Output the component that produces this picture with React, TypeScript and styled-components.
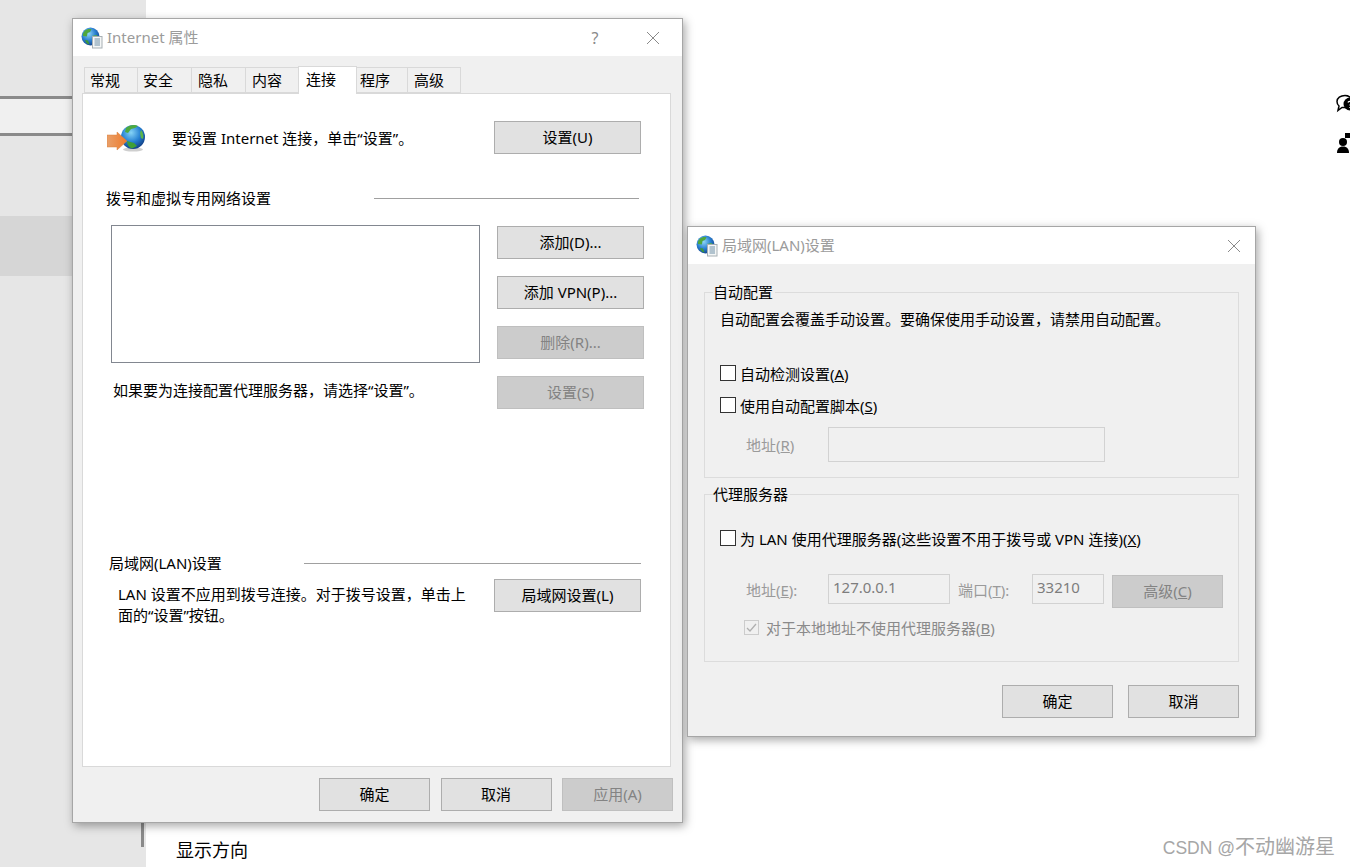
import React from "react";
import styled, { createGlobalStyle } from "styled-components";

const GlobalStyle = createGlobalStyle`
  html, body {
    margin: 0;
    padding: 0;
    background: #fff;
  }
  * {
    box-sizing: border-box;
  }
  body {
    font-family: "Noto Sans", "Noto Sans CJK SC", sans-serif;
    font-size: 15px;
    color: #000;
  }
`;

const Page = styled.div`
  position: relative;
  display: flex;
  width: 1350px;
  height: 867px;
  overflow: hidden;
  background: #fff;
`;

const Sidebar = styled.aside`
  width: 146px;
  height: 100%;
  background: #e6e6e6;
  display: flex;
  flex-direction: column;
  padding-top: 96px;
`;

const SideItem = styled.div`
  height: 40px;
  background: #f0f0f0;
  border-top: 3px solid #8a8a8a;
  border-bottom: 3px solid #8a8a8a;
`;

const SideActive = styled.div`
  height: 60px;
  margin-top: 80px;
  background: #d6d6d6;
`;

const SideThumb = styled.div`
  width: 3px;
  height: 60px;
  margin-top: auto;
  margin-bottom: 20px;
  margin-left: 141px;
  background: #8a8a8a;
`;

const Main = styled.main`
  flex: 1;
  display: flex;
  flex-direction: column;
  padding-top: 94px;
`;

const Rail = styled.div`
  align-self: flex-end;
  width: 14px;
  display: flex;
  flex-direction: column;
  gap: 19px;
  overflow: hidden;
`;

const Caption = styled.div`
  margin-top: auto;
  margin-bottom: 4px;
  margin-left: 30px;
  font-size: 18px;
  line-height: 26px;
`;

const Watermark = styled.div`
  position: absolute;
  right: 15px;
  bottom: 6px;
  font-family: "Liberation Sans", "Noto Sans CJK SC", sans-serif;
  font-size: 20px;
  line-height: 26px;
  color: #a6a6a6;
`;

const WatermarkLatin = styled.span`
  font-size: 17.5px;
`;

const Win = styled.section<{ $x: number; $y: number; $w: number; $h: number }>`
  position: absolute;
  left: ${(p) => p.$x}px;
  top: ${(p) => p.$y}px;
  width: ${(p) => p.$w}px;
  height: ${(p) => p.$h}px;
  display: flex;
  flex-direction: column;
  background: #f0f0f0;
  border: 1px solid #a6a6a6;
  box-shadow: 2px 3px 9px rgba(0, 0, 0, 0.35);
`;

const TitleBar = styled.header`
  height: 37px;
  flex: none;
  background: #fff;
  display: flex;
  align-items: center;
  padding-left: 8px;
`;

const TitleText = styled.span`
  margin-left: 4px;
  margin-bottom: 2px;
  color: #9b9b9b;
  font-size: 15px;
  flex: 1;
`;

const TitleBtn = styled.button<{ $w: number }>`
  width: ${(p) => p.$w}px;
  height: 37px;
  padding: 0;
  border: 0;
  background: none;
  color: #8a8a8a;
  font: inherit;
  font-size: 16px;
  display: flex;
  align-items: center;
  justify-content: center;
`;

const TabRow = styled.div`
  display: flex;
  align-items: flex-end;
  height: 37px;
  flex: none;
  padding-left: 11px;
`;

const Tab = styled.div<{ $active?: boolean; $w: number; $pad: number }>`
  width: ${(p) => p.$w}px;
  height: ${(p) => (p.$active ? 28 : 26)}px;
  margin-bottom: ${(p) => (p.$active ? -1 : 0)}px;
  padding-top: 1px;
  padding-left: ${(p) => p.$pad}px;
  position: relative;
  z-index: ${(p) => (p.$active ? 1 : 0)};
  background: ${(p) => (p.$active ? "#fff" : "#f0f0f0")};
  border: 1px solid #d9d9d9;
  border-bottom: ${(p) => (p.$active ? "0" : "1px solid #d9d9d9")};
  margin-right: -1px;
  font-size: 15px;
  line-height: 22px;
`;

const TabPanel = styled.div`
  width: 589px;
  height: 674px;
  margin-left: 9px;
  background: #fff;
  border: 1px solid #d9d9d9;
  display: flex;
  flex-direction: column;
  padding-top: 27px;
`;

const SetupRow = styled.div`
  display: flex;
  align-items: center;
  height: 33px;
  padding-left: 24px;
`;

const SetupText = styled.span`
  margin-left: 27px;
  width: 322px;
  line-height: 20px;
`;

const SectionHead = styled.div<{ $left: number; $gap: number; $top: number; $w: number }>`
  display: flex;
  align-items: center;
  width: ${(p) => p.$w}px;
  margin-left: ${(p) => p.$left}px;
  margin-top: ${(p) => p.$top}px;
  height: 22px;
  gap: ${(p) => p.$gap}px;
  &::after {
    content: "";
    flex: 1;
    height: 1px;
    background: #a0a0a0;
  }
`;

const HeadText = styled.span`
  margin-bottom: 2px;
`;

const DialGrid = styled.div`
  display: grid;
  grid-template-columns: 369px 147px;
  column-gap: 17px;
  margin-left: 28px;
  margin-top: 16px;
`;

const ListBox = styled.div`
  height: 138px;
  background: #fff;
  border: 1px solid #828790;
`;

const DialLeft = styled.div`
  display: flex;
  flex-direction: column;
`;

const Hint = styled.div`
  margin-top: 16px;
  margin-left: 2px;
  line-height: 22px;
`;

const DialButtons = styled.div`
  display: flex;
  flex-direction: column;
  gap: 17px;
  padding-top: 1px;
`;

const Btn = styled.button<{ $disabled?: boolean; $w?: number }>`
  width: ${(p) => (p.$w ? `${p.$w}px` : "100%")};
  height: 33px;
  flex: none;
  padding: 0 0 2px;
  background: ${(p) => (p.$disabled ? "#cccccc" : "#e1e1e1")};
  border: 1px solid ${(p) => (p.$disabled ? "#bfbfbf" : "#adadad")};
  color: ${(p) => (p.$disabled ? "#838383" : "#000")};
  font: inherit;
  font-size: 15px;
  line-height: 20px;
`;

const AdvancedBtn = styled(Btn)`
  margin: 2px 0 -2px 8px;
`;

const LanRow = styled.div`
  display: flex;
  align-items: flex-start;
  margin-top: 5px;
  margin-left: 35px;
`;

const LanText = styled.p`
  width: 376px;
  margin: 0;
  padding-top: 5px;
  font-size: 15px;
  line-height: 21px;
`;

const Footer = styled.footer<{ $pad: number; $top: number; $gap: number }>`
  display: flex;
  justify-content: flex-end;
  gap: ${(p) => p.$gap}px;
  padding-right: ${(p) => p.$pad}px;
  margin-top: ${(p) => p.$top}px;
`;

const LanBody = styled.div`
  flex: 1;
  padding: 27px 16px 0;
  display: flex;
  flex-direction: column;
`;

const Group = styled.fieldset<{ $h: number; $top?: number }>`
  height: ${(p) => p.$h}px;
  margin: ${(p) => p.$top ?? 0}px 0 0;
  padding: 0 15px;
  min-width: 0;
  border: 1px solid #dcdcdc;
  display: block;
`;

const GroupLabel = styled.legend`
  position: relative;
  top: 1px;
  padding: 0 2px 0 0;
  margin-left: -7px;
  font-size: 15px;
  line-height: 0;
  height: 2px;
`;

const Notice = styled.p`
  margin: 15px 0 0;
  line-height: 22px;
  font-size: 15px;
`;

const CheckRow = styled.label<{ $top: number; $left?: number; $off?: boolean }>`
  display: flex;
  align-items: center;
  gap: ${(p) => (p.$off ? 7 : 4)}px;
  height: 22px;
  margin-top: ${(p) => p.$top}px;
  margin-left: ${(p) => p.$left ?? 0}px;
  color: ${(p) => (p.$off ? "#8a8a8a" : "#000")};
`;

const Box = styled.span<{ $off?: boolean }>`
  width: ${(p) => (p.$off ? 15 : 16)}px;
  height: ${(p) => (p.$off ? 15 : 16)}px;
  flex: none;
  background: ${(p) => (p.$off ? "#f0f0f0" : "#fff")};
  border: 1px solid ${(p) => (p.$off ? "#cccccc" : "#333")};
  display: flex;
  align-items: center;
  justify-content: center;
`;

const FieldRow = styled.div<{ $top: number }>`
  display: flex;
  align-items: center;
  margin-top: ${(p) => p.$top}px;
  margin-left: 26px;
`;

const FieldLabel = styled.span<{ $w: number; $pad?: number }>`
  width: ${(p) => p.$w}px;
  padding-left: ${(p) => p.$pad ?? 0}px;
  flex: none;
  color: #9a9a9a;
`;

const Field = styled.div<{ $w: number; $h: number }>`
  width: ${(p) => p.$w}px;
  height: ${(p) => p.$h}px;
  flex: none;
  border: 1px solid #d2d2d2;
  background: #f0f0f0;
  color: #7d7d7d;
  padding-left: 4px;
  font-size: 15px;
  line-height: 24px;
`;

const ProxyField = styled(Field)`
  margin-bottom: 1px;
`;

const GlobeDoc = () => (
  <svg width="22" height="22" viewBox="0 0 22 22">
    <defs>
      <radialGradient id="sea" cx="40%" cy="35%" r="70%">
        <stop offset="0" stopColor="#8fd6f5" />
        <stop offset="0.55" stopColor="#2a7fd0" />
        <stop offset="1" stopColor="#123f86" />
      </radialGradient>
    </defs>
    <circle cx="9.5" cy="9.5" r="9" fill="url(#sea)" />
    <path d="M4 3.5c2-1.6 5-2 6.5-1.2L9 5 6.5 6 5.8 9.5 2 9c-.5-2 .6-4 2-5.5z" fill="#4fa73c" />
    <path d="M11 9l4-1 2.5 1.5c0 3-1.4 5.5-3.5 6.8L12 13z" fill="#58b046" />
    <path d="M4 13l3 .5 1.5 4c-2-.2-3.7-1.800-4.500-4.500z" fill="#3f9a34" />
    <rect x="11.5" y="9.5" width="9.5" height="11.5" fill="#f4f6f6" stroke="#a8b0b4" strokeWidth="1" />
    <path d="M13.500 12h5.500M13.500 14h5.500M13.500 16h5.500M13.500 18h5.500" stroke="#6f8fa6" strokeWidth="1" />
  </svg>
);

const ConnectIcon = () => (
  <svg width="38" height="28" viewBox="0 0 38 28">
    <defs>
      <radialGradient id="sea2" cx="42%" cy="32%" r="72%">
        <stop offset="0" stopColor="#86d4f6" />
        <stop offset="0.55" stopColor="#2580d2" />
        <stop offset="1" stopColor="#10397f" />
      </radialGradient>
      <linearGradient id="arrow" x1="0" y1="0" x2="1" y2="0">
        <stop offset="0" stopColor="#e9a06a" />
        <stop offset="1" stopColor="#ee7a2a" />
      </linearGradient>
    </defs>
    <ellipse cx="26" cy="25.5" rx="10" ry="2" fill="#cfcfcf" />
    <circle cx="26" cy="13" r="12" fill="url(#sea2)" />
    <path d="M19 4c3-3 9-4 12-2l-3 2-4 1-3 4-3-1z" fill="#4eaa3f" />
    <path d="M34 6c2 2 3 6 2 9l-2-1-1-5z" fill="#5cb548" />
    <path d="M20 17l7 2 3 3-5 2.5c-3-.8-5-3.500-5-7.500z" fill="#3f9e37" />
    <path d="M0 11h10V8l10 9-10 9v-3H0z" fill="url(#arrow)" stroke="#d9813d" strokeWidth=".5" />
  </svg>
);

const CloseIcon = () => (
  <svg width="14" height="14" viewBox="0 0 14 14">
    <path d="M1 1l12 12M13 1L1 13" stroke="#8a8a8a" strokeWidth="1" fill="none" />
  </svg>
);

const ChatIcon = () => (
  <svg width="22" height="20" viewBox="0 0 22 20">
    <path d="M9 1.500c4 0 7 2.500 7 6s-3 6-7 6H6l-4 3 1-4.500C1.700 11 1 9.500 1 7.500c0-3.500 3.500-6 8-6z" fill="#fff" stroke="#000" strokeWidth="1.500" />
    <circle cx="14" cy="10" r="6.500" fill="#000" />
    <path d="M12 8.500c.3-1.500 3.800-1.500 3.800.4 0 1.300-1.800 1.300-1.800 2.600M14 13v1" stroke="#fff" strokeWidth="1.300" fill="none" />
  </svg>
);

const PersonIcon = () => (
  <svg width="22" height="20" viewBox="0 0 22 20">
    <path d="M9 0h8v7l-3-2H9z" fill="#000" />
    <circle cx="7" cy="9" r="4" fill="#000" />
    <path d="M1 20c0-4 2-6.500 6-6.500s6 2.500 6 6.500z" fill="#000" />
  </svg>
);

const TABS: [string, number, number][] = [
  ["常规", 54, 5],
  ["安全", 55, 5],
  ["隐私", 55, 6],
  ["内容", 54, 6],
  ["连接", 59, 7],
  ["程序", 52, 3],
  ["高级", 54, 6],
];

const InternetWindow = () => (
  <Win $x={72} $y={18} $w={611} $h={805}>
    <TitleBar>
      <GlobeDoc />
      <TitleText>Internet 属性</TitleText>
      <TitleBtn $w={58}>?</TitleBtn>
      <TitleBtn $w={58}>
        <CloseIcon />
      </TitleBtn>
    </TitleBar>
    <TabRow>
      {TABS.map(([name, w, pad]) => (
        <Tab key={name} $w={w} $pad={pad} $active={name === "连接"}>
          {name}
        </Tab>
      ))}
    </TabRow>
    <TabPanel>
      <SetupRow>
        <ConnectIcon />
        <SetupText>要设置 Internet 连接，单击“设置”。</SetupText>
        <Btn $w={147}>设置(U)</Btn>
      </SetupRow>
      <SectionHead $left={23} $gap={103} $top={33} $w={533}>
        <HeadText>拨号和虚拟专用网络设置</HeadText>
      </SectionHead>
      <DialGrid>
        <DialLeft>
          <ListBox />
          <Hint>如果要为连接配置代理服务器，请选择“设置”。</Hint>
        </DialLeft>
        <DialButtons>
          <Btn>添加(D)...</Btn>
          <Btn>添加 VPN(P)...</Btn>
          <Btn $disabled>删除(R)...</Btn>
          <Btn $disabled>设置(S)</Btn>
        </DialButtons>
      </DialGrid>
      <SectionHead $left={26} $gap={82} $top={143} $w={532}>
        <HeadText>局域网(LAN)设置</HeadText>
      </SectionHead>
      <LanRow>
        <LanText>
          LAN 设置不应用到拨号连接。对于拨号设置，单击上
          <br />
          面的“设置”按钮。
        </LanText>
        <Btn $w={147}>局域网设置(L)</Btn>
      </LanRow>
    </TabPanel>
    <Footer $pad={9} $top={11} $gap={10.5}>
      <Btn $w={111}>确定</Btn>
      <Btn $w={111}>取消</Btn>
      <Btn $w={111} $disabled>
        应用(A)
      </Btn>
    </Footer>
  </Win>
);

const LanWindow = () => (
  <Win $x={687} $y={226} $w={569} $h={511}>
    <TitleBar>
      <GlobeDoc />
      <TitleText>局域网(LAN)设置</TitleText>
      <TitleBtn $w={42}>
        <CloseIcon />
      </TitleBtn>
    </TitleBar>
    <LanBody>
      <Group $h={187}>
        <GroupLabel>自动配置</GroupLabel>
        <Notice>自动配置会覆盖手动设置。要确保使用手动设置，请禁用自动配置。</Notice>
        <CheckRow $top={32}>
          <Box />
          <span>
            自动检测设置(<u>A</u>)
          </span>
        </CheckRow>
        <CheckRow $top={10}>
          <Box />
          <span>
            使用自动配置脚本(<u>S</u>)
          </span>
        </CheckRow>
        <FieldRow $top={11}>
          <FieldLabel $w={82}>
            地址(<u>R</u>)
          </FieldLabel>
          <Field $w={277} $h={35} />
        </FieldRow>
      </Group>
      <Group $h={169} $top={15}>
        <GroupLabel>代理服务器</GroupLabel>
        <CheckRow $top={32}>
          <Box />
          <span>
            为 LAN 使用代理服务器(这些设置不用于拨号或 VPN 连接)(<u>X</u>)
          </span>
        </CheckRow>
        <FieldRow $top={24}>
          <FieldLabel $w={82}>
            地址(<u>E</u>):
          </FieldLabel>
          <ProxyField $w={122} $h={30}>
            127.0.0.1
          </ProxyField>
          <FieldLabel $w={82} $pad={8}>
            端口(<u>T</u>):
          </FieldLabel>
          <ProxyField $w={72} $h={30}>
            33210
          </ProxyField>
          <AdvancedBtn $w={111} $disabled>
            高级(<u>C</u>)
          </AdvancedBtn>
        </FieldRow>
        <CheckRow $top={10} $left={24} $off>
          <Box $off>
            <svg width="11" height="11" viewBox="0 0 11 11">
              <path d="M1 6l3 3 6-7" stroke="#b0b0b0" strokeWidth="1.300" fill="none" />
            </svg>
          </Box>
          <span>
            对于本地地址不使用代理服务器(<u>B</u>)
          </span>
        </CheckRow>
      </Group>
      <Footer $pad={0} $top={23} $gap={15}>
        <Btn $w={111}>确定</Btn>
        <Btn $w={111}>取消</Btn>
      </Footer>
    </LanBody>
  </Win>
);

const App = () => (
  <Page>
    <GlobalStyle />
    <Sidebar>
      <SideItem />
      <SideActive />
      <SideThumb />
    </Sidebar>
    <Main>
      <Rail>
        <ChatIcon />
        <PersonIcon />
      </Rail>
      <Caption>显示方向</Caption>
    </Main>
    <InternetWindow />
    <LanWindow />
    <Watermark>
      <WatermarkLatin>CSDN @</WatermarkLatin>不动幽游星
    </Watermark>
  </Page>
);

export default App;
